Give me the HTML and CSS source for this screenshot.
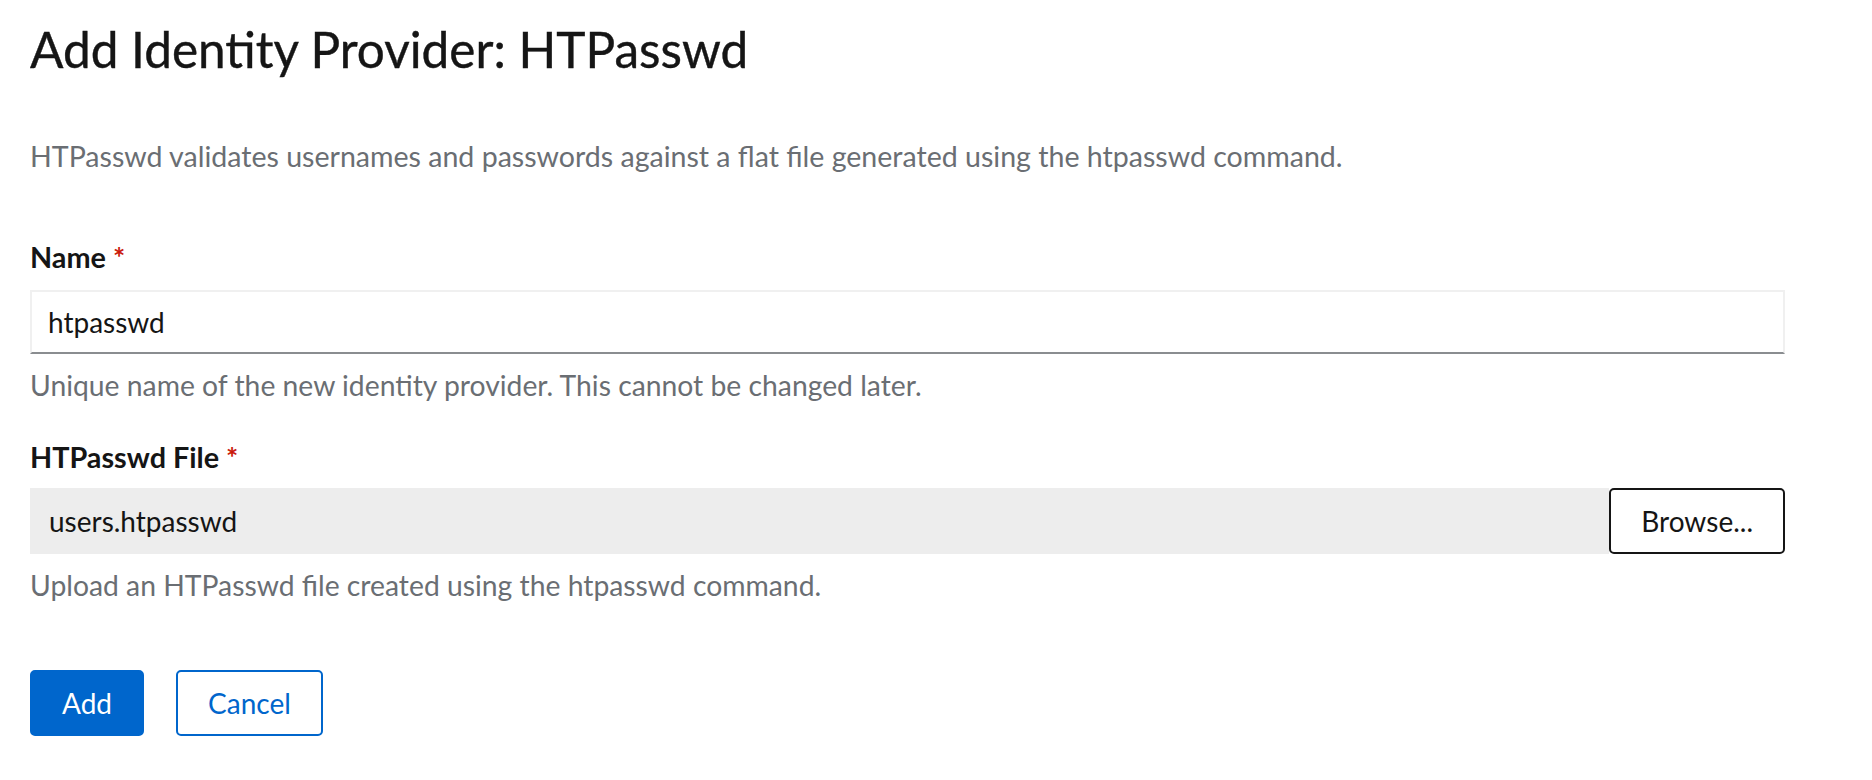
FILE: index.html
```html
<!DOCTYPE html>
<html lang="en">
<head>
<meta charset="utf-8">
<title>Add Identity Provider: HTPasswd</title>
<link rel="stylesheet" href="styles.css">
</head>
<body>
<main class="page">
  <h1 class="title">Add Identity Provider: HTPasswd</h1>
  <p class="desc">HTPasswd validates usernames and passwords against a flat file generated using the htpasswd command.</p>
  <form class="form">
    <div class="group group-name">
      <label class="label" for="name">Name <span class="req">*</span></label>
      <input class="text-input" id="name" type="text" value="htpasswd">
      <div class="helper">Unique name of the new identity provider. This cannot be changed later.</div>
    </div>
    <div class="group group-file">
      <label class="label" for="file">HTPasswd File <span class="req">*</span></label>
      <div class="file-row">
        <div class="file-name" id="file">users.htpasswd</div>
        <button type="button" class="btn btn-browse">Browse...</button>
      </div>
      <div class="helper">Upload an HTPasswd file created using the htpasswd command.</div>
    </div>
    <div class="actions">
      <button type="button" class="btn btn-primary">Add</button>
      <button type="button" class="btn btn-secondary">Cancel</button>
    </div>
  </form>
</main>
</body>
</html>
```
FILE: styles.css
```css
* { box-sizing: border-box; }
html, body { margin: 0; padding: 0; background: #fff; }
body {
  font-family: "Lato", "Liberation Sans", sans-serif;
  color: #151515;
}
.page {
  padding: 19px 87px 0 30px;
}
.title {
  margin: 0;
  font-size: 49.5px;
  font-weight: 400;
  line-height: 60px;
  color: #151515;
  -webkit-text-stroke: 0.4px #151515;
}
.desc {
  margin: 58px 0 0;
  font-size: 28.55px;
  line-height: 38px;
  color: #6a6e73;
}
.form {
  display: flex;
  flex-direction: column;
}
.group {
  display: flex;
  flex-direction: column;
}
.group-name { margin-top: 64px; }
.group-file { margin-top: 36px; }
.label {
  font-size: 28.8px;
  font-weight: 700;
  line-height: 36px;
  color: #151515;
}
.req {
  color: #c9190b;
}
.text-input {
  margin-top: 15px;
  height: 64px;
  width: 100%;
  padding: 0 16px;
  border: 2px solid #f0f0f0;
  border-bottom-color: #8a8d90;
  background: #fff;
  font-family: inherit;
  font-size: 28px;
  color: #151515;
  outline: none;
}
.helper {
  margin-top: 13px;
  font-size: 28.3px;
  line-height: 36px;
  color: #6a6e73;
}
.file-row {
  margin-top: 13px;
  display: flex;
  height: 66px;
}
.file-name {
  flex: 1;
  background: #ededed;
  display: flex;
  align-items: center;
  padding: 0 19px;
  font-size: 28px;
  color: #151515;
}
.btn {
  height: 66px;
  padding: 0 30px;
  border: 2px solid transparent;
  border-radius: 5px;
  font-family: inherit;
  font-size: 28px;
  line-height: 1;
  background: #fff;
  cursor: pointer;
}
.btn-browse {
  border-color: #151515;
  color: #151515;
  padding: 0 30px;
}
.actions {
  margin-top: 67px;
  display: flex;
  gap: 32px;
}
.btn-primary {
  background: #0066cc;
  border-color: #0066cc;
  color: #fff;
}
.btn-secondary {
  border-color: #0066cc;
  color: #0066cc;
}
```
